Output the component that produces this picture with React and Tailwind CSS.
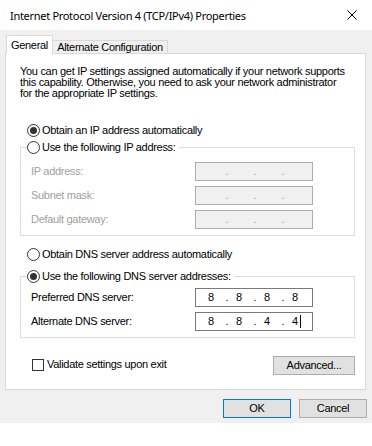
import React from "react";

function Radio({ checked }) {
  return (
    <span className="w-[13px] h-[13px] rounded-full border border-[#333333] bg-white flex items-center justify-center shrink-0">
      {checked ? <span className="w-[7px] h-[7px] rounded-full bg-[#333333]" /> : null}
    </span>
  );
}

function IpBox({ values, disabled, cursor }) {
  const v = values || ["", "", "", ""];
  const dot = disabled ? "text-[#a0a0a0]" : "text-black";
  return (
    <div
      className={
        "w-[118px] h-[19px] border flex items-center " +
        (disabled ? "bg-[#f0f0f0] border-[#adadad]" : "bg-white border-[#7a7a7a]")
      }
    >
      <span className="w-[8px] ml-[11px] text-center">{v[0]}</span>
      <span className={"w-[4px] ml-[10px] text-center " + dot}>.</span>
      <span className="w-[8px] ml-[6px] text-center">{v[1]}</span>
      <span className={"w-[4px] ml-[10px] text-center " + dot}>.</span>
      <span className="w-[8px] ml-[6px] text-center">{v[2]}</span>
      <span className={"w-[4px] ml-[10px] text-center " + dot}>.</span>
      <span className="w-[8px] ml-[6px] text-center">{v[3]}</span>
      {cursor ? <span className="w-px h-[13px] bg-black ml-[1px]" /> : null}
    </div>
  );
}

function Row({ label, disabled, values, cursor }) {
  return (
    <div className="flex items-center h-[19px]">
      <span className={"w-[168px] pl-[4px] " + (disabled ? "text-[#a0a0a0]" : "text-black")}>{label}</span>
      <IpBox values={values} disabled={disabled} cursor={cursor} />
    </div>
  );
}

export default function App() {
  return (
    <div className="w-[372px] h-[446px] bg-white font-['Liberation_Sans',Arial,sans-serif] text-[11px] leading-[11px] tracking-[-0.3px] text-black">
      <div className="h-[30px] flex items-center justify-between pl-[10px] pr-[10px]">
        <span className="text-[11px] font-['Noto_Sans',sans-serif] tracking-[-0.3px]">
          Internet Protocol Version 4 (TCP/IPv4) Properties
        </span>
        <svg width="10" height="10" viewBox="0 0 10 10" className="mr-[5px]">
          <path d="M0.5 0.5 L9.5 9.5 M9.5 0.5 L0.5 9.5" stroke="#000" strokeWidth="1" />
        </svg>
      </div>
      <div className="h-[393px] bg-[#f0f0f0] pt-[5px] pl-[5px] pr-[5px] flex flex-col">
        <div className="flex items-end h-[18px]">
          <div className="relative z-10 -mb-px ml-px w-[47px] h-[19px] bg-white border-l border-t border-r border-[#d9d9d9] flex items-center justify-center">
            General
          </div>
          <div className="w-[115px] h-[13px] bg-[#f0f0f0] border-t border-r border-[#d9d9d9] flex items-center justify-center pt-px">
            Alternate Configuration
          </div>
        </div>
        <div className="w-[361px] h-[337px] bg-white border border-[#d9d9d9] flex flex-col pl-[14px]">
          <div className="mt-[12px] whitespace-nowrap">
            You can get IP settings assigned automatically if your network supports
            <br />
            this capability. Otherwise, you need to ask your network administrator
            <br />
            for the appropriate IP settings.
          </div>
          <div className="mt-[24px] h-[14px] flex items-center ml-[7px] gap-[2px]">
            <Radio checked />
            <span>Obtain an IP address automatically</span>
          </div>
          <fieldset className="mt-[3px] w-[335px] border border-[#dcdcdc] pl-[6px] pt-[8px] pb-[6px] flex flex-col gap-[5px]">
            <legend className="h-[14px] flex items-center gap-[2px] pr-[3px] bg-white">
              <Radio />
              <span>Use the following IP address:</span>
            </legend>
            <Row label="IP address:" disabled />
            <Row label="Subnet mask:" disabled />
            <Row label="Default gateway:" disabled />
          </fieldset>
          <div className="mt-[11px] h-[14px] flex items-center ml-[7px] gap-[2px]">
            <Radio />
            <span>Obtain DNS server address automatically</span>
          </div>
          <fieldset className="mt-[8px] w-[335px] border border-[#dcdcdc] pl-[6px] pt-[5px] pb-[6px] flex flex-col gap-[5px]">
            <legend className="h-[14px] flex items-center gap-[2px] pr-[3px] bg-white">
              <Radio checked />
              <span>Use the following DNS server addresses:</span>
            </legend>
            <Row label="Preferred DNS server:" values={["8", "8", "8", "8"]} />
            <Row label="Alternate DNS server:" values={["8", "8", "4", "4"]} cursor />
          </fieldset>
          <div className="mt-[18px] h-[19px] flex items-center justify-between w-[335px]">
            <div className="flex items-center gap-[3px] ml-[12px] -mt-[2px]">
              <span className="w-[12px] h-[12px] border border-[#333333] bg-white" />
              <span>Validate settings upon exit</span>
            </div>
            <button className="w-[82px] h-[19px] bg-[#e1e1e1] border border-[#adadad] flex items-center justify-center">
              Advanced...
            </button>
          </div>
        </div>
        <div className="mt-[9px] flex justify-end gap-[8px]">
          <button className="w-[68px] h-[19px] bg-[#e1e1e1] border border-[#0078d7] flex items-center justify-center">
            OK
          </button>
          <button className="w-[68px] h-[19px] bg-[#e1e1e1] border border-[#adadad] flex items-center justify-center">
            Cancel
          </button>
        </div>
      </div>
    </div>
  );
}
